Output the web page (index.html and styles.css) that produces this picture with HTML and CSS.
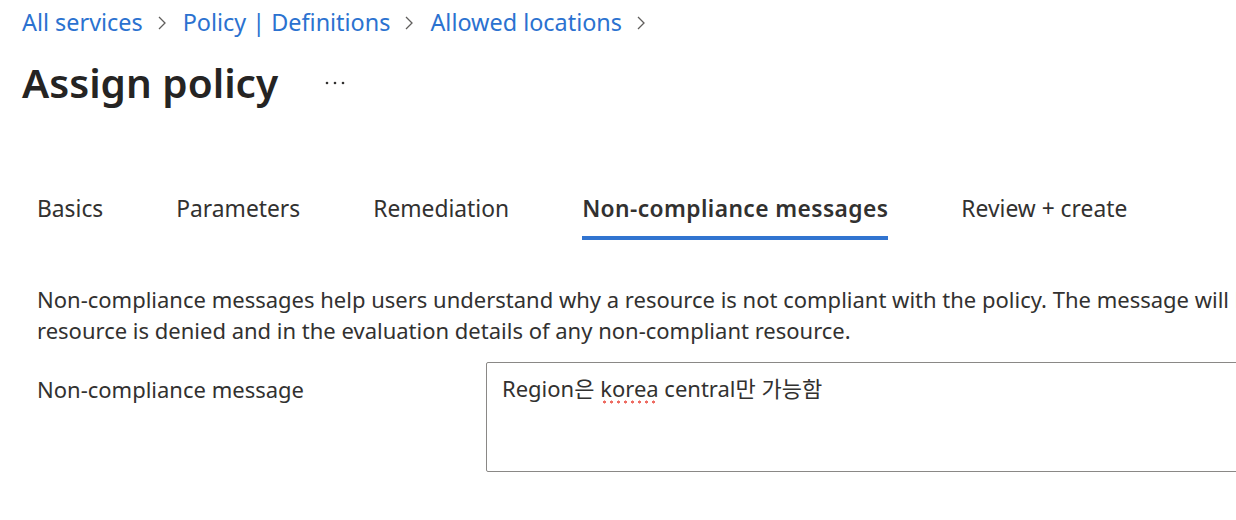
FILE: index.html
```html
<!DOCTYPE html>
<html lang="en">
<head>
<meta charset="utf-8">
<title>Assign policy</title>
<link rel="stylesheet" href="styles.css">
</head>
<body>
<div class="page">
  <nav class="breadcrumb">
    <a class="crumb" href="#">All services</a>
    <svg class="chev" viewBox="0 0 10 16" width="10" height="16"><path d="M2 2 L8 8 L2 14" fill="none" stroke="#605e5c" stroke-width="1.3"/></svg>
    <a class="crumb" href="#">Policy | Definitions</a>
    <svg class="chev" viewBox="0 0 10 16" width="10" height="16"><path d="M2 2 L8 8 L2 14" fill="none" stroke="#605e5c" stroke-width="1.3"/></svg>
    <a class="crumb" href="#">Allowed locations</a>
    <svg class="chev" viewBox="0 0 10 16" width="10" height="16"><path d="M2 2 L8 8 L2 14" fill="none" stroke="#605e5c" stroke-width="1.3"/></svg>
  </nav>
  <header class="title-row">
    <h1 class="title">Assign policy</h1>
    <svg class="more" viewBox="0 0 20 4" width="20" height="4"><circle cx="2" cy="2" r="1.3" fill="#323130"/><circle cx="10" cy="2" r="1.3" fill="#323130"/><circle cx="18" cy="2" r="1.3" fill="#323130"/></svg>
  </header>
  <div class="tabs">
    <div class="tab">Basics</div>
    <div class="tab">Parameters</div>
    <div class="tab">Remediation</div>
    <div class="tab active">Non-compliance messages</div>
    <div class="tab">Review + create</div>
  </div>
  <section class="content">
    <p class="desc">Non-compliance messages help users understand why a resource is not compliant with the policy. The message will be displayed when a<br>resource is denied and in the evaluation details of any non-compliant resource.</p>
    <div class="field">
      <label class="label">Non-compliance message</label>
      <div class="input">Region은 <span class="spell">korea</span> central만 가능함</div>
    </div>
  </section>
</div>
</body>
</html>
```
FILE: styles.css
```css
html, body {
  margin: 0;
  padding: 0;
  background: #ffffff;
  overflow: hidden;
}
body {
  font-family: "Noto Sans", "Noto Sans CJK KR", sans-serif;
  color: #323130;
  width: 1236px;
  height: 520px;
  overflow: hidden;
}
.page {
  padding-left: 22px;
}
.breadcrumb {
  display: flex;
  align-items: center;
  height: 44px;
  font-size: 23.4px;
  white-space: nowrap;
}
.crumb {
  color: #2b72d0;
  text-decoration: none;
}
.chev {
  margin: 2px 16px 0 14px;
}
.title-row {
  display: flex;
  align-items: center;
  height: 76px;
}
.title {
  margin: 0;
  font-size: 40.5px;
  font-weight: 600;
  color: #252423;
}
.more {
  margin-left: 47px;
  margin-top: 2px;
}
.tabs {
  display: flex;
  margin-top: 73px;
  padding-left: 15px;
  font-size: 22.8px;
  white-space: nowrap;
}
.tab {
  padding-bottom: 12px;
  border-bottom: 4px solid transparent;
  margin-right: 73px;
}
.tab.active {
  font-weight: 600;
  letter-spacing: 0.4px;
  border-bottom-color: #3174d0;
}
.content {
  padding-left: 15px;
  padding-top: 44px;
  font-size: 22px;
  white-space: nowrap;
}
.desc {
  margin: 0;
  line-height: 31px;
}
.field {
  display: flex;
  margin-top: 16px;
}
.label {
  flex: 0 0 449px;
  padding-top: 12px;
}
.input {
  flex: 0 0 900px;
  height: 110px;
  border: 1px solid #8a8886;
  border-radius: 2px;
  padding: 8px 15px;
  box-sizing: border-box;
}
.spell {
  padding-bottom: 1px;
  background-image: radial-gradient(circle, #ee6b61 1.3px, transparent 1.8px);
  background-size: 7px 4px;
  background-repeat: repeat-x;
  background-position: 1px bottom;
}
```
